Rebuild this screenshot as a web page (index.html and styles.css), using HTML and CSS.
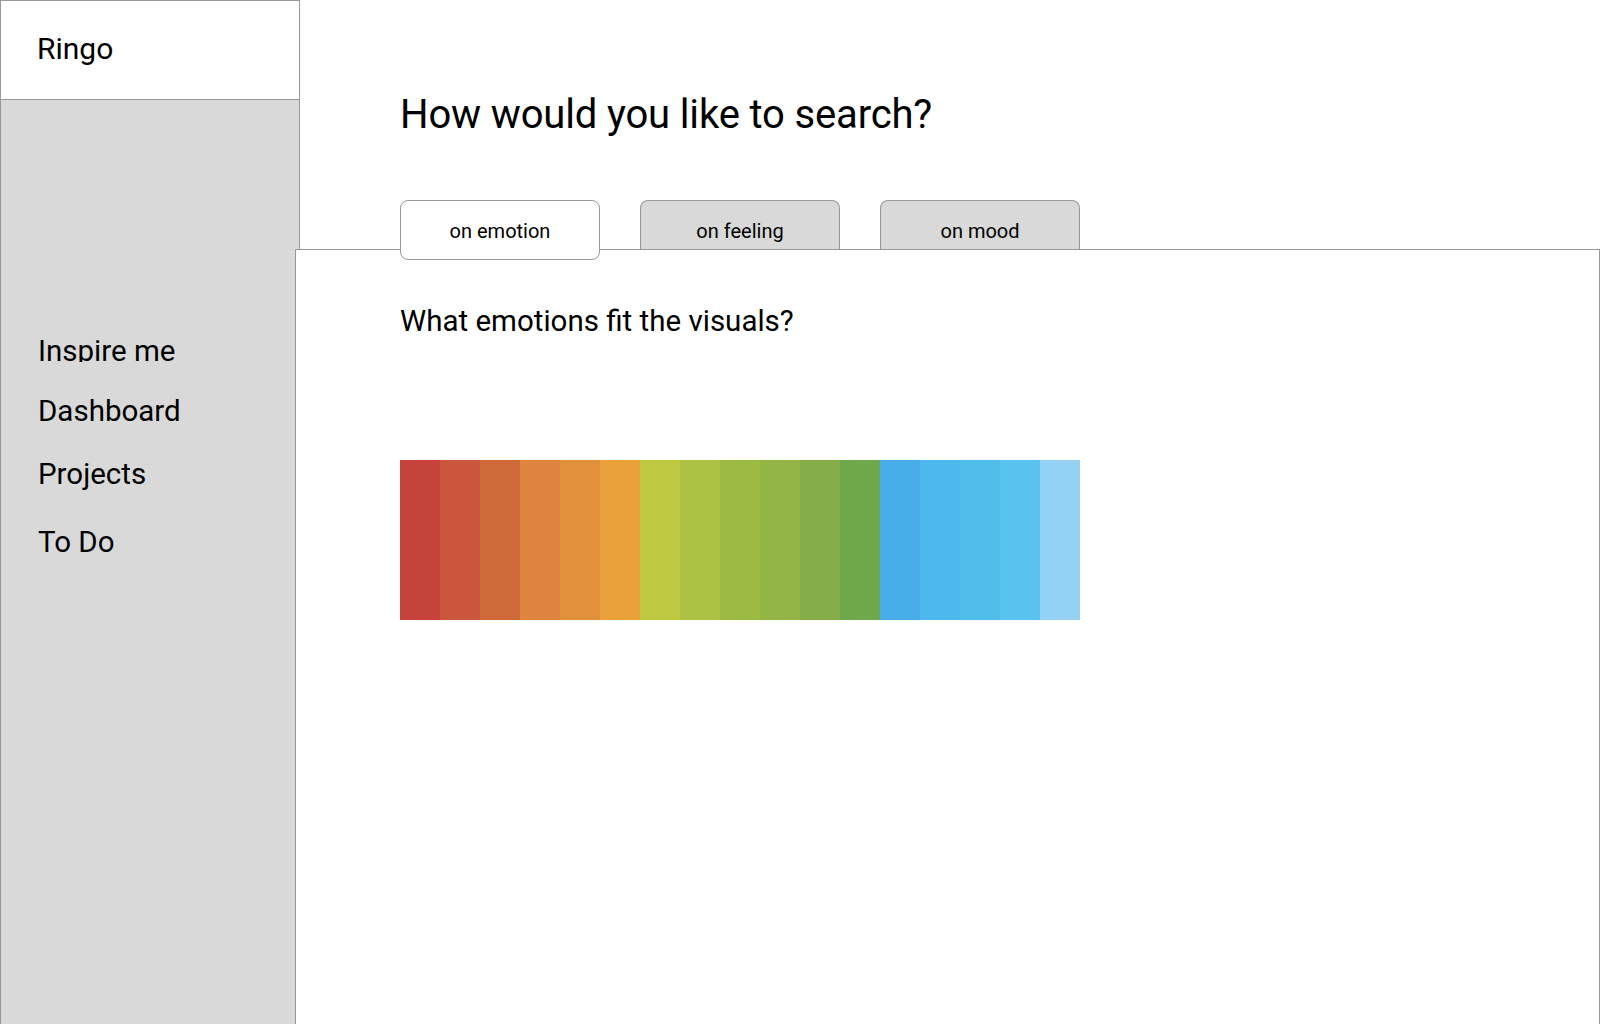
FILE: index.html
```html
<!DOCTYPE html>
<html lang="en">
<head>
<meta charset="utf-8">
<title>Ringo</title>
<link rel="stylesheet" href="styles.css">
</head>
<body>
<div class="app">
  <aside class="sidebar">
    <div class="brand">Ringo</div>
    <nav class="nav">
      <a class="nav-item nav-inspire">Inspire me</a>
      <a class="nav-item nav-dashboard">Dashboard</a>
      <a class="nav-item nav-projects">Projects</a>
      <a class="nav-item nav-todo">To Do</a>
    </nav>
  </aside>
  <main class="main">
    <h1 class="title">How would you like to search?</h1>
    <div class="tabs">
      <div class="tab tab-active">on emotion</div>
      <div class="tab">on feeling</div>
      <div class="tab">on mood</div>
    </div>
    <section class="panel">
      <h2 class="subtitle">What emotions fit the visuals?</h2>
      <div class="spectrum">
        <span class="swatch" style="background:#c4443c"></span>
        <span class="swatch" style="background:#cb573e"></span>
        <span class="swatch" style="background:#cf6a3a"></span>
        <span class="swatch" style="background:#de843e"></span>
        <span class="swatch" style="background:#e3903c"></span>
        <span class="swatch" style="background:#eaa03b"></span>
        <span class="swatch" style="background:#bfca42"></span>
        <span class="swatch" style="background:#abc245"></span>
        <span class="swatch" style="background:#9dba45"></span>
        <span class="swatch" style="background:#92b546"></span>
        <span class="swatch" style="background:#85ae4a"></span>
        <span class="swatch" style="background:#6fa84b"></span>
        <span class="swatch" style="background:#47aeea"></span>
        <span class="swatch" style="background:#4db8ee"></span>
        <span class="swatch" style="background:#51bdeb"></span>
        <span class="swatch" style="background:#59c3f0"></span>
        <span class="swatch" style="background:#94d2f4"></span>
      </div>
    </section>
  </main>
</div>
</body>
</html>
```

FILE: styles.css
```css
html, body {
  margin: 0;
  padding: 0;
  height: 100%;
  overflow: hidden;
  background: #ffffff;
}

body {
  font-family: Roboto, "Liberation Sans", Arial, sans-serif;
  color: #000000;
}

.app {
  display: flex;
  height: 100vh;
}

/* Sidebar */
.sidebar {
  box-sizing: border-box;
  width: 300px;
  flex: 0 0 300px;
  height: 100%;
  background: #d9d9d9;
  border: 1px solid #999999;
  border-bottom: 0;
  display: flex;
  flex-direction: column;
}

.brand {
  box-sizing: border-box;
  height: 99px;
  background: #ffffff;
  border-bottom: 1px solid #999999;
  padding: 30px 0 0 36px;
  font-size: 30px;
  line-height: 36px;
}

.nav {
  display: flex;
  flex-direction: column;
  padding: 233px 0 0 37px;
}

.nav-item {
  display: block;
  font-size: 29.5px;
  line-height: 36px;
  color: #000000;
  text-decoration: none;
}

.nav-inspire {
  height: 29px;
  overflow: hidden;
}

.nav-dashboard {
  margin-top: 31px;
}

.nav-projects {
  margin-top: 27px;
}

.nav-todo {
  margin-top: 32px;
}

/* Main */
.main {
  flex: 1 1 auto;
  display: flex;
  flex-direction: column;
  min-width: 0;
}

.title {
  margin: 91px 0 0 100px;
  font-size: 40px;
  line-height: 48px;
  font-weight: 400;
  letter-spacing: -0.15px;
}

.tabs {
  display: flex;
  align-items: flex-start;
  gap: 40px;
  height: 49px;
  margin: 61px 0 0 100px;
}

.tab {
  box-sizing: border-box;
  width: 200px;
  height: 49px;
  padding-top: 18px;
  background: #d9d9d9;
  border: 1px solid #999999;
  border-bottom: 0;
  border-radius: 8px 8px 0 0;
  font-size: 20px;
  line-height: 24px;
  text-align: center;
}

.tab-active {
  position: relative;
  z-index: 1;
  height: 60px;
  background: #ffffff;
  border-bottom: 1px solid #999999;
  border-radius: 8px;
}

.panel {
  flex: 1 1 auto;
  margin-left: -5px;
  background: #ffffff;
  border: 1px solid #999999;
  border-bottom: 0;
  padding: 53px 0 0 104px;
}

.subtitle {
  margin: 0;
  font-size: 29.5px;
  line-height: 36px;
  font-weight: 400;
}

.spectrum {
  display: flex;
  width: 680px;
  height: 160px;
  margin-top: 121px;
}

.swatch {
  flex: 0 0 40px;
  height: 100%;
}
```
